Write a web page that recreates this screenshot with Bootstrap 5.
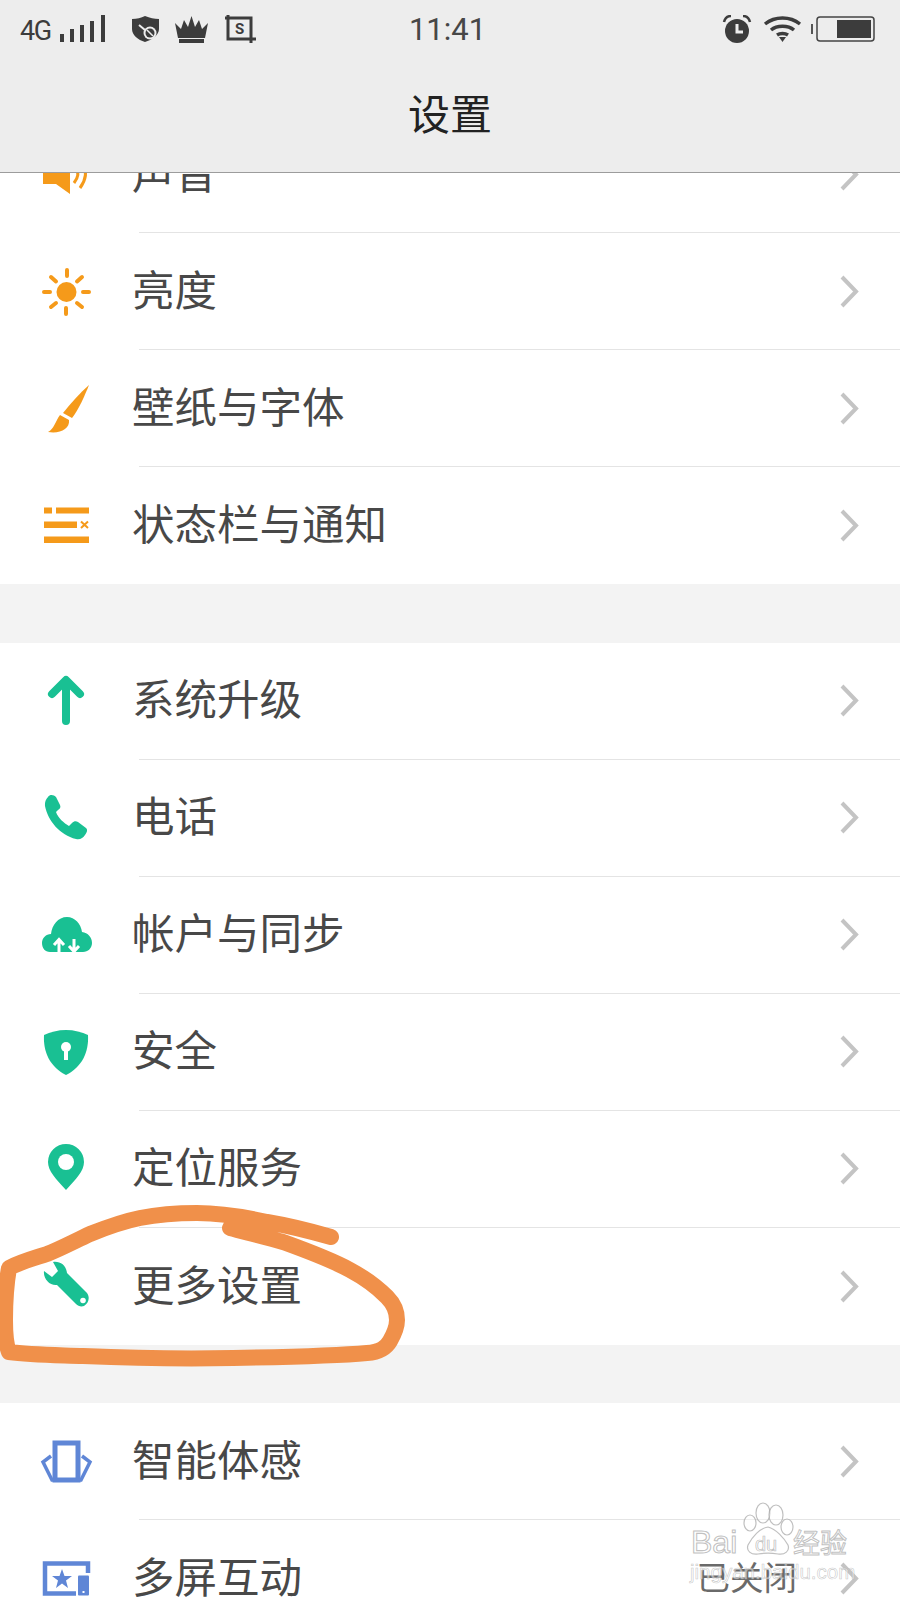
<!DOCTYPE html>
<html lang="zh-CN">
<head>
<meta charset="utf-8">
<title>设置</title>
<link href="https://cdn.jsdelivr.net/npm/bootstrap@5.3.0/dist/css/bootstrap.min.css" rel="stylesheet">
<style>
html,body{margin:0;background:#f3f3f3}
.phone-page{width:900px;height:1600px;overflow:hidden;position:relative;background:#f3f3f3;font-family:"Noto Sans CJK SC","Liberation Sans",sans-serif;color:#404040}
.top-head{position:relative;z-index:5;background:#ededed;height:172.5px;border-bottom:1.5px solid #9c9c9c}
.stat-bar{height:58px;padding:0 25px 0 20px;color:#3c3c3c;font-family:Roboto,"Liberation Sans",sans-serif}
.stat-side{flex:1 1 0}
.stat-net{font-size:27px;letter-spacing:-1.5px;margin-top:4px;line-height:1;width:40px}
.stat-time{font-size:31px;line-height:1;color:#474747;margin-top:1px}
.ic-s{display:block;flex:none}
.ml-a{margin-left:26px}.ml-b{margin-left:16px}.ml-c{margin-left:17px}.ml-d{margin-left:11px}.ml-e{margin-left:9px}
.head-title{font-size:42px;line-height:108px;color:#222;text-align:center}
.scroll-area{margin-top:-56.5px}
.set-group{background:#fff;margin-bottom:58.5px;border-radius:0}
.set-row{display:flex;align-items:stretch;height:117px;padding:0;border:0;background:#fff}
.ic-box{flex:none;width:139px;padding-left:36px;display:flex;align-items:center}
.ic-box svg{display:block}
.row-main{flex:1 1 auto;display:flex;align-items:center;justify-content:space-between;border-bottom:1.5px solid #e4e4e4;padding-right:41px}
.set-row:last-child .row-main{border-bottom:0}
.row-name{font-size:42.5px;line-height:1;margin-left:-7px;padding-bottom:6px;color:#484848}
.row-side{display:flex;align-items:center}
.row-val{font-size:33.5px;line-height:1;color:#6a6a6a;margin-right:43px;padding-bottom:6px}
.wm{position:absolute;left:688px;top:1500px;width:170px;height:84px;z-index:6;color:rgba(255,255,255,.5);pointer-events:none;font-family:"Liberation Sans",sans-serif}
.wm-bai{position:absolute;left:3px;top:26px;font-size:32px;line-height:1;-webkit-text-stroke:1.1px rgba(165,165,165,.7)}
.wm-du{position:absolute;left:67px;top:34px;font-size:20px;line-height:1;-webkit-text-stroke:.7px rgba(165,165,165,.75)}
.wm-jy{position:absolute;left:105px;top:28px;font-size:27px;line-height:1;font-family:"Noto Sans CJK SC",sans-serif;-webkit-text-stroke:1px rgba(165,165,165,.7)}
.wm-url{position:absolute;left:2px;top:62px;font-size:20.5px;line-height:1;white-space:nowrap;-webkit-text-stroke:.6px rgba(170,170,170,.65)}
.wm svg{position:absolute;left:0;top:0}
.ink{position:absolute;left:0;top:0;z-index:4;pointer-events:none}
</style>
</head>
<body>
<div class="phone-page">
  <header class="top-head">
    <div class="stat-bar d-flex align-items-center">
      <div class="stat-side d-flex align-items-center">
        <span class="stat-net">4G</span>
        <svg class="ic-s" width="46" height="28" viewBox="0 0 46 28" fill="#3c3c3c"><rect x="0" y="19" width="4" height="8"/><rect x="10" y="14" width="4" height="13"/><rect x="20" y="10" width="4" height="17"/><rect x="30" y="6" width="4" height="21"/><rect x="41" y="0" width="4" height="27"/></svg>
        <svg class="ic-s ml-a" width="27" height="26" viewBox="0 0 27 26"><path d="M13 0C18 2 22 3 27 3V13C27 19 20 24 13 26C6 24 0 19 0 13V3C5 3 9 2 13 0Z" fill="#3c3c3c"/><circle cx="18" cy="17" r="6.5" fill="#ededed"/><circle cx="18" cy="17" r="4.5" fill="#3c3c3c"/><path d="M15 14L21 20" stroke="#ededed" stroke-width="1.5"/><path d="M7 9L13 14" stroke="#ededed" stroke-width="2"/></svg>
        <svg class="ic-s ml-b" width="33" height="27" viewBox="0 0 33 27" fill="#3c3c3c"><path d="M0 7L6 13L9 4L13 11L16.500 0L20 11L24 4L27 13L33 7L30 22H3Z"/><rect x="4" y="23" width="25" height="4"/></svg>
        <svg class="ic-s ml-c" width="31" height="28" viewBox="0 0 31 28" fill="none" stroke="#3c3c3c" stroke-width="3"><path d="M3 0V24H31M0 3H26V28"/><text x="14.500" y="19" text-anchor="middle" font-size="15" font-weight="700" font-family="Roboto,sans-serif" fill="#3c3c3c" stroke="none">S</text></svg>
      </div>
      <div class="stat-time">11:41</div>
      <div class="stat-side d-flex align-items-center justify-content-end">
        <svg class="ic-s" width="30" height="28" viewBox="0 0 30 28"><circle cx="15" cy="16" r="12" fill="#3c3c3c"/><path d="M15 9V17H21" fill="none" stroke="#ededed" stroke-width="3"/><path d="M2 7C3 3 6 1 9 1M28 7C27 3 24 1 21 1" fill="none" stroke="#3c3c3c" stroke-width="2.500"/></svg>
        <svg class="ic-s ml-d" width="39" height="26" viewBox="0 0 39 26" fill="none" stroke="#3c3c3c" stroke-width="3.500"><path d="M2 8C12 0 27 0 37 8"/><path d="M8 14C14 9 25 9 31 14"/><path d="M14 19C17 17 22 17 25 19" /><path d="M16 21H23L19.500 26Z" fill="#3c3c3c" stroke="none"/></svg>
        <svg class="ic-s ml-e" width="64" height="26" viewBox="0 0 64 26"><rect x="0" y="8" width="2" height="10" fill="#555"/><rect x="6" y="1" width="57" height="24" rx="3" fill="none" stroke="#444" stroke-width="1.500"/><rect x="26" y="4" width="34" height="18" fill="#3c3c3c"/></svg>
      </div>
    </div>
    <div class="head-title">设置</div>
  </header>

  <div class="scroll-area">
    <ul class="list-group list-group-flush set-group">
      <li class="list-group-item set-row">
        <div class="ic-box"><svg width="60" height="60" viewBox="0 0 60 60"><path d="M7 18H19L34 8V49L20 39H7Z" fill="#f59a1a"/><path d="M40 22C43 27 42 33 38 38M47 18C51 26 50 35 44 43" fill="none" stroke="#f59a1a" stroke-width="3"/></svg></div>
        <div class="row-main"><span class="row-name">声音</span><svg width="19" height="33" viewBox="0 0 19 33"><path d="M2 2L16 16.500L2 31" fill="none" stroke="#c4c4c4" stroke-width="4"/></svg></div>
      </li>
      <li class="list-group-item set-row">
        <div class="ic-box"><svg width="60" height="60" viewBox="0 0 60 60"><circle cx="30.500" cy="30" r="10" fill="#f59a1a"/><g stroke="#f59a1a" stroke-width="4" stroke-linecap="round"><path d="M31 8V14M30 46V52M8 30H14M47 30H53M15 15L20 19.500M41 41L46 45M46 15L41 19.500M15 45L20 41"/></g></svg></div>
        <div class="row-main"><span class="row-name">亮度</span><svg width="19" height="33" viewBox="0 0 19 33"><path d="M2 2L16 16.500L2 31" fill="none" stroke="#c4c4c4" stroke-width="4"/></svg></div>
      </li>
      <li class="list-group-item set-row">
        <div class="ic-box"><svg width="60" height="60" viewBox="0 0 60 60" fill="#f59a1a"><path d="M53 6C49 16 43 30 36 39L27 34C35 24 44 14 53 6Z"/><path d="M24 36L33 41C34 50 24 55 12 53C18 50 19 43 24 36Z"/></svg></div>
        <div class="row-main"><span class="row-name">壁纸与字体</span><svg width="19" height="33" viewBox="0 0 19 33"><path d="M2 2L16 16.500L2 31" fill="none" stroke="#c4c4c4" stroke-width="4"/></svg></div>
      </li>
      <li class="list-group-item set-row">
        <div class="ic-box"><svg width="60" height="60" viewBox="0 0 60 60" fill="#f59a1a"><rect x="8" y="11.500" width="8" height="6"/><rect x="20" y="11.500" width="33" height="6"/><rect x="8" y="25.500" width="33" height="6.500"/><rect x="8" y="40.500" width="45" height="6.500"/><path d="M45 25.500L52 32M52 25.500L45 32" stroke="#f59a1a" stroke-width="2"/></svg></div>
        <div class="row-main"><span class="row-name">状态栏与通知</span><svg width="19" height="33" viewBox="0 0 19 33"><path d="M2 2L16 16.500L2 31" fill="none" stroke="#c4c4c4" stroke-width="4"/></svg></div>
      </li>
    </ul>

    <ul class="list-group list-group-flush set-group">
      <li class="list-group-item set-row">
        <div class="ic-box"><svg width="60" height="60" viewBox="0 0 60 60" fill="none" stroke="#19c093" stroke-width="8" stroke-linecap="round" stroke-linejoin="round"><path d="M30 10V50M16 23L30 9L44 23"/></svg></div>
        <div class="row-main"><span class="row-name">系统升级</span><svg width="19" height="33" viewBox="0 0 19 33"><path d="M2 2L16 16.500L2 31" fill="none" stroke="#c4c4c4" stroke-width="4"/></svg></div>
      </li>
      <li class="list-group-item set-row">
        <div class="ic-box"><svg width="60" height="60" viewBox="0 0 60 60"><path d="M12 9C14 6 18 7 20 9L24 17C25 19 24 21 22 22L20 24C22 30 28 35 33 38L36 35C38 33 40 33 42 34L50 40C52 42 51 44 49 47C47 50 44 52 40 51C24 47 12 33 9 18C8.500 14 10 11 12 9Z" fill="#19c093"/></svg></div>
        <div class="row-main"><span class="row-name">电话</span><svg width="19" height="33" viewBox="0 0 19 33"><path d="M2 2L16 16.500L2 31" fill="none" stroke="#c4c4c4" stroke-width="4"/></svg></div>
      </li>
      <li class="list-group-item set-row">
        <div class="ic-box"><svg width="60" height="60" viewBox="0 0 60 60"><path d="M14 47C9 47 6 43 6 38C6 33 10 29 15 29C16 20 22 12 31 12C39 12 45 19 46 27C52 28 56 32 56 38C56 43 52 47 47 47Z" fill="#19c093"/><path d="M23 47V36M18 40L23 34.500L28 40M38 34V45M33 41L38 46.500L43 41" fill="none" stroke="#fff" stroke-width="3"/></svg></div>
        <div class="row-main"><span class="row-name">帐户与同步</span><svg width="19" height="33" viewBox="0 0 19 33"><path d="M2 2L16 16.500L2 31" fill="none" stroke="#c4c4c4" stroke-width="4"/></svg></div>
      </li>
      <li class="list-group-item set-row">
        <div class="ic-box"><svg width="60" height="60" viewBox="0 0 60 60"><path d="M30 8C38 8 46 10 52 13C53 30 46 45 30 53C14 45 7 30 8 13C14 10 22 8 30 8Z" fill="#19c093"/><circle cx="30" cy="25" r="5" fill="#fff"/><rect x="28" y="25" width="4" height="13" fill="#fff"/></svg></div>
        <div class="row-main"><span class="row-name">安全</span><svg width="19" height="33" viewBox="0 0 19 33"><path d="M2 2L16 16.500L2 31" fill="none" stroke="#c4c4c4" stroke-width="4"/></svg></div>
      </li>
      <li class="list-group-item set-row">
        <div class="ic-box"><svg width="60" height="60" viewBox="0 0 60 60"><path d="M30 51C20 40 12 32 12 23A18 18 0 0 1 48 23C48 32 40 40 30 51Z" fill="#19c093"/><circle cx="30" cy="23" r="8" fill="#fff"/></svg></div>
        <div class="row-main"><span class="row-name">定位服务</span><svg width="19" height="33" viewBox="0 0 19 33"><path d="M2 2L16 16.500L2 31" fill="none" stroke="#c4c4c4" stroke-width="4"/></svg></div>
      </li>
      <li class="list-group-item set-row">
        <div class="ic-box"><svg width="60" height="60" viewBox="0 0 60 60"><path d="M8 15L16 21L22 15L17 6C24 5 30 9 31 17L51 37C54 41 53 47 48 50C45 51 42 50 40 48L21 29C14 30 7 23 8 15Z" fill="#19c093"/><circle cx="47" cy="44.500" r="2.800" fill="#fff"/></svg></div>
        <div class="row-main"><span class="row-name">更多设置</span><svg width="19" height="33" viewBox="0 0 19 33"><path d="M2 2L16 16.500L2 31" fill="none" stroke="#c4c4c4" stroke-width="4"/></svg></div>
      </li>
    </ul>

    <ul class="list-group list-group-flush set-group">
      <li class="list-group-item set-row">
        <div class="ic-box"><svg width="60" height="60" viewBox="0 0 60 60" fill="none" stroke="#5f86d6"><rect x="19" y="11" width="23" height="37" stroke-width="5"/><path d="M15 24L7 30L16 48H45L54 30L46 24" stroke-width="3.500"/></svg></div>
        <div class="row-main"><span class="row-name">智能体感</span><svg width="19" height="33" viewBox="0 0 19 33"><path d="M2 2L16 16.500L2 31" fill="none" stroke="#c4c4c4" stroke-width="4"/></svg></div>
      </li>
      <li class="list-group-item set-row">
        <div class="ic-box"><svg width="60" height="60" viewBox="0 0 60 60" fill="#5f86d6"><path d="M40 44.500H9V14.500H52V24" fill="none" stroke="#5f86d6" stroke-width="4.500"/><path d="M26 20L28.500 27H36L30 31.500L32 39L26 34.500L20 39L22 31.500L16 27H23.500Z"/><rect x="42" y="26.500" width="11" height="20" rx="1"/><rect x="46.500" y="42" width="2" height="2" fill="#fff"/></svg></div>
        <div class="row-main"><span class="row-name">多屏互动</span><div class="row-side"><span class="row-val">已关闭</span><svg width="19" height="33" viewBox="0 0 19 33"><path d="M2 2L16 16.500L2 31" fill="none" stroke="#c4c4c4" stroke-width="4"/></svg></div></div>
      </li>
    </ul>
  </div>

  <svg class="ink" width="900" height="1600" viewBox="0 0 900 1600" fill="none"><path d="M331 1237C310 1231 285 1225 267 1222C240 1216 215 1213 197 1213C175 1213 155 1215 140 1218C120 1222 105 1228 90 1234C75 1241 60 1249 47 1254C35 1258 20 1262 9 1268C6 1285 5 1300 5 1320C5 1335 6 1345 9 1352C30 1355 55 1355 83 1356C130 1358 180 1359 233 1358C290 1357 335 1356 367 1353C380 1352 386 1348 390 1341C394 1334 397 1327 397 1320C397 1311 393 1303 387 1297C378 1288 365 1278 350 1270C330 1259 305 1250 283 1242C265 1237 245 1232 230 1228" stroke="#f0904a" stroke-width="16" stroke-linecap="round" stroke-linejoin="round"/></svg>

  <div class="wm">
    <svg width="170" height="84" viewBox="0 0 170 84" fill="rgba(255,255,255,.4)" stroke="rgba(165,165,165,.7)" stroke-width="1.200"><ellipse cx="62" cy="23" rx="6" ry="8"/><ellipse cx="75" cy="13" rx="7" ry="10"/><ellipse cx="88" cy="15" rx="7" ry="10"/><ellipse cx="99" cy="27" rx="6" ry="8"/><path d="M80 27C88 29 96 38 100 45C102 51 97 55 90 54C84 53 76 53 70 54C63 55 58 51 60 45C64 37 72 28 80 27Z"/></svg>
    <span class="wm-bai">Bai</span><span class="wm-du">du</span><span class="wm-jy">经验</span>
    <span class="wm-url">jingyan.baidu.com</span>
  </div>
</div>
<script src="https://cdn.jsdelivr.net/npm/bootstrap@5.3.0/dist/js/bootstrap.bundle.min.js"></script>
</body>
</html>
